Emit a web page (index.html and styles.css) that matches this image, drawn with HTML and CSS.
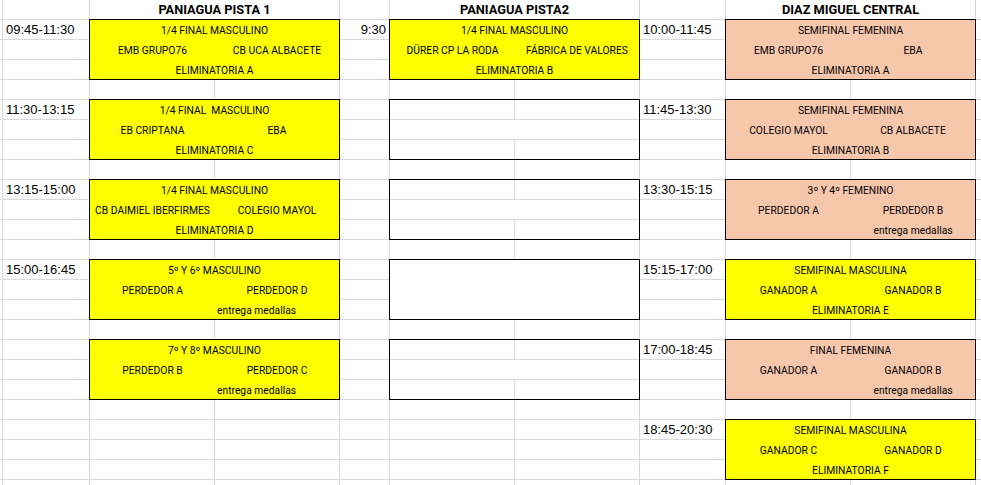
FILE: index.html
```html
<!DOCTYPE html>
<html lang="es">
<head>
<meta charset="utf-8">
<title>Horario</title>
<link rel="stylesheet" href="styles.css">
</head>
<body>
<div class="sheet">
  <div class="gl c1"></div><div class="gl c2"></div><div class="gl c3"></div><div class="gl c4"></div><div class="gl c5"></div>
  <div class="gl c6"></div><div class="gl c7"></div><div class="gl c8"></div><div class="gl c9"></div><div class="gl c10"></div>

  <div class="hdr p1">PANIAGUA PISTA 1</div>
  <div class="hdr p2">PANIAGUA PISTA2</div>
  <div class="hdr pc">DIAZ MIGUEL CENTRAL</div>

  <div class="time ta y1">09:45-11:30</div>
  <div class="time ta y5">11:30-13:15</div>
  <div class="time ta y9">13:15-15:00</div>
  <div class="time ta y13">15:00-16:45</div>

  <div class="time td y1">9:30</div>

  <div class="time tg y1">10:00-11:45</div>
  <div class="time tg y5">11:45-13:30</div>
  <div class="time tg y9">13:30-15:15</div>
  <div class="time tg y13">15:15-17:00</div>
  <div class="time tg y17">17:00-18:45</div>
  <div class="time tg y21">18:45-20:30</div>

  <!-- Pista 1 -->
  <div class="box yellow p1 y1">
    <div class="t">1/4 FINAL MASCULINO</div>
    <div class="a">EMB GRUPO76</div><div class="b">CB UCA ALBACETE</div>
    <div class="t">ELIMINATORIA A</div>
  </div>
  <div class="box yellow p1 y5">
    <div class="t">1/4 FINAL&nbsp; MASCULINO</div>
    <div class="a">EB CRIPTANA</div><div class="b">EBA</div>
    <div class="t">ELIMINATORIA C</div>
  </div>
  <div class="box yellow p1 y9">
    <div class="t">1/4 FINAL MASCULINO</div>
    <div class="a">CB DAIMIEL IBERFIRMES</div><div class="b">COLEGIO MAYOL</div>
    <div class="t">ELIMINATORIA D</div>
  </div>
  <div class="box yellow p1 y13">
    <div class="t">5º Y 6º MASCULINO</div>
    <div class="a">PERDEDOR A</div><div class="b">PERDEDOR D</div>
    <div class="note left">entrega medallas</div>
  </div>
  <div class="box yellow p1 y17">
    <div class="t">7º Y 8º MASCULINO</div>
    <div class="a">PERDEDOR B</div><div class="b">PERDEDOR C</div>
    <div class="note left">entrega medallas</div>
  </div>

  <!-- Pista 2 -->
  <div class="box yellow p2 y1">
    <div class="t">1/4 FINAL MASCULINO</div>
    <div class="a">DÜRER CP LA RODA</div><div class="b">FÁBRICA DE VALORES</div>
    <div class="t">ELIMINATORIA B</div>
  </div>
  <div class="box empty p2 y5"><div class="mid"></div></div>
  <div class="box empty p2 y9"><div class="mid"></div></div>
  <div class="box white p2 y13"></div>
  <div class="box empty p2 y17"><div class="mid"></div></div>

  <!-- Central -->
  <div class="box peach pc y1">
    <div class="t">SEMIFINAL FEMENINA</div>
    <div class="a">EMB GRUPO76</div><div class="b">EBA</div>
    <div class="t">ELIMINATORIA A</div>
  </div>
  <div class="box peach pc y5">
    <div class="t">SEMIFINAL FEMENINA</div>
    <div class="a">COLEGIO MAYOL</div><div class="b">CB ALBACETE</div>
    <div class="t">ELIMINATORIA B</div>
  </div>
  <div class="box peach pc y9">
    <div class="t">3º Y 4º FEMENINO</div>
    <div class="a">PERDEDOR A</div><div class="b">PERDEDOR B</div>
    <div class="note center">entrega medallas</div>
  </div>
  <div class="box yellow pc y13">
    <div class="t">SEMIFINAL MASCULINA</div>
    <div class="a">GANADOR A</div><div class="b">GANADOR B</div>
    <div class="t">ELIMINATORIA E</div>
  </div>
  <div class="box peach pc y17">
    <div class="t">FINAL FEMENINA</div>
    <div class="a">GANADOR A</div><div class="b">GANADOR B</div>
    <div class="note center">entrega medallas</div>
  </div>
  <div class="box yellow pc y21">
    <div class="t">SEMIFINAL MASCULINA</div>
    <div class="a">GANADOR C</div><div class="b">GANADOR D</div>
    <div class="t">ELIMINATORIA F</div>
  </div>
</div>
</body>
</html>
```
FILE: styles.css
```css
html, body {
  margin: 0;
  padding: 0;
  background: #fff;
  overflow: hidden;
}

.sheet {
  display: grid;
  grid-template-columns: 3px 87px 125px 125px 50px 125px 125px 86px 125px 125px 1fr;
  grid-template-rows: repeat(25, 20px);
  width: 981px;
  height: 500px;
  background: repeating-linear-gradient(to bottom, transparent 0 19px, #d9d9d9 19px 20px);
  font-family: Roboto, "Noto Sans", sans-serif;
  color: #000;
}

.gl {
  grid-row: 1 / -1;
  border-right: 1px solid #d9d9d9;
}
.c1 { grid-column: 1; }
.c2 { grid-column: 2; }
.c3 { grid-column: 3; }
.c4 { grid-column: 4; }
.c5 { grid-column: 5; }
.c6 { grid-column: 6; }
.c7 { grid-column: 7; }
.c8 { grid-column: 8; }
.c9 { grid-column: 9; }
.c10 { grid-column: 10; }

.p1 { grid-column: 3 / 5; }
.p2 { grid-column: 6 / 8; }
.pc { grid-column: 9 / 11; }

.y1 { grid-row-start: 2; }
.y5 { grid-row-start: 6; }
.y9 { grid-row-start: 10; }
.y13 { grid-row-start: 14; }
.y17 { grid-row-start: 18; }
.y21 { grid-row-start: 22; }

.hdr {
  grid-row: 1;
  margin: 0 1px 1px 0;
  background: #fff;
  text-align: center;
  font-weight: 700;
  font-size: 12.8px;
  line-height: 17px;
  padding-top: 1px;
  color: #000;
  white-space: nowrap;
}

.time {
  font-family: "Liberation Sans", Arial, sans-serif;
  font-size: 13px;
  line-height: 20px;
  color: #000;
  white-space: nowrap;
}
.ta { grid-column: 2; padding-left: 3px; }
.td { grid-column: 5; text-align: right; padding-right: 4px; }
.tg { grid-column: 8; padding-left: 3px; }

.box {
  grid-row-end: span 3;
  margin: -1px 0 0 -1px;
  border: 1px solid #000;
  display: grid;
  grid-template-columns: 125px 1fr;
  grid-template-rows: 20px 20px 1fr;
  font-size: 10.3px;
  line-height: 18px;
  white-space: nowrap;
}
.yellow { background: #ffff00; }
.peach { background: #f7c7ac; }
.white { background: #fff; }
.empty { background: transparent; }

.box .t {
  grid-column: 1 / -1;
  text-align: center;
  padding-top: 2px;
}
.box .a,
.box .b {
  text-align: center;
  padding-top: 2px;
}
.box .note {
  grid-column: 2;
  padding-top: 2px;
}
.note.left { text-align: left; padding-left: 2px; }
.note.center { text-align: center; }

.box .mid {
  grid-row: 2;
  grid-column: 1 / -1;
  background: linear-gradient(to bottom, #fff 0 19px, transparent 19px);
}
```
